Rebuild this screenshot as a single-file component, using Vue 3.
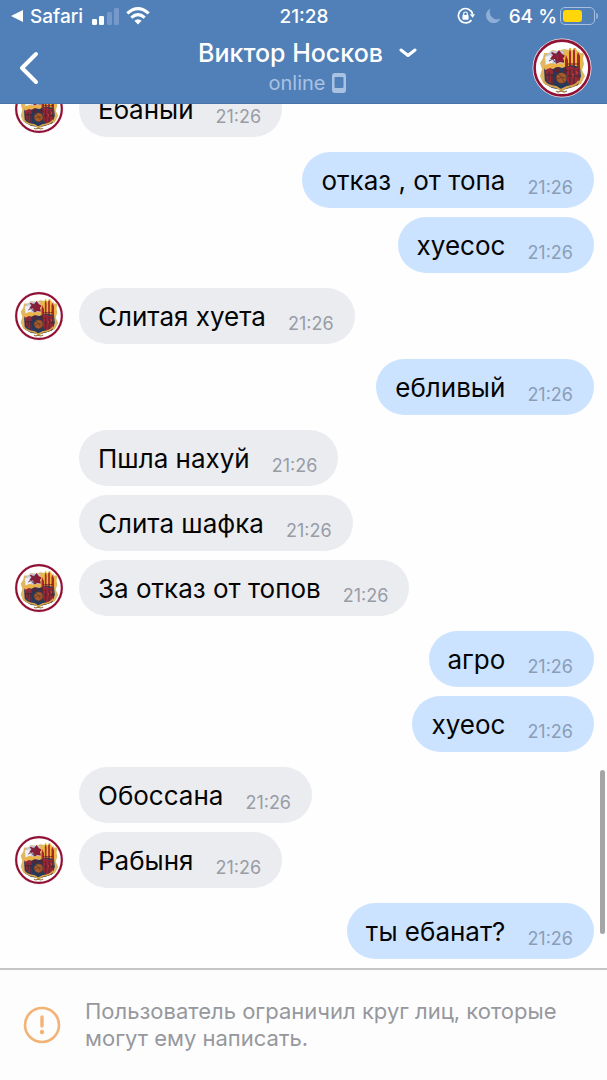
<script setup>
import { computed } from 'vue';

const contact = { name: 'Виктор Носков', status: 'online' };

// messages are grouped by sender, the avatar goes next to the last one
const groups = [
  { out: false, messages: ['Ебаный'] },
  { out: true, messages: ['отказ , от топа', 'хуесос'] },
  { out: false, messages: ['Слитая хуета'] },
  { out: true, messages: ['ебливый'] },
  { out: false, messages: ['Пшла нахуй', 'Слита шафка', 'За отказ от топов'] },
  { out: true, messages: ['агро', 'хуеос'] },
  { out: false, messages: ['Обоссана', 'Рабыня'] },
  { out: true, messages: ['ты ебанат?'] },
];

const time = '21:26';
const battery = 64;
const batteryWidth = computed(() => `${battery}%`);
</script>

<template>
  <div class="screen">
    <svg class="defs" aria-hidden="true">
      <symbol id="crest" viewBox="0 0 60 60">
        <circle cx="30" cy="30" r="29.5" fill="#f7e9ef" />
        <circle cx="30" cy="30" r="27.4" fill="#fff" stroke="#8f1235" stroke-width="2.6" />
        <!-- gold frame -->
        <path d="M12 15l5 0 3-3 6 1 6-2 5 1 8 0 2 3 5 0-1 6 1 5-2 6 3 6-4 8-8 3-6 1-4 3-5-3-9-2-6-3-3-7 2-7-2-6 3-5z" fill="#dfb865" />
        <!-- knight -->
        <path d="M14 17l6-4 11 0 1 13-10 2-9-1z" fill="#c3cbdb" />
        <path d="M13 19l5-2 3 4-1 5-6 1z" fill="#eef0f4" />
        <path d="M20 14l4 2 3-4 3 4 4 2-3 2 2 5-5-1-4 2-1-5-5 0 3-4-2-2z" fill="#8c1a36" />
        <path d="M17 23l4-2 2 3 4-1M24 15l2 6" stroke="#5a4259" stroke-width="1" fill="none" />
        <!-- towers -->
        <path d="M32 29V20l2-7 2 6 1-9 2 0 1 8 2-8 2 0 1 8 2-6 2 8v12l-8 4z" fill="#efb73a" />
        <path d="M33 32V22l1-5 2 5v10zM37 33V14l1-3 1 3v19zM41 33V13l1-3 1 3v20zM45 33V17l1-3 2 4v15z" fill="#a42b28" />
        <path d="M35 26h12M35 30h12" stroke="#76251f" stroke-width="1" />
        <!-- lower part -->
        <path d="M12 30l9-3 9 3 9-3 9 2 1 9-3 9-8 3-8 2-10-2-7-4z" fill="#26385b" />
        <path d="M13 31l5-2 3 4 0 14-6-4zM34 29l5-1 4 2 5-1 0 9-3 9-6 2-4-6z" fill="#972732" />
        <path d="M11 28l8-3 4 1 5-1 4 1-1 3-5 0-5 2-3-1-5 2z" fill="#edb34b" />
        <path d="M22 31l2-2 3 1 0 4-4 1zM31 31l3-1 2 3-3 2z" fill="#5f222f" />
        <path d="M17 34v9M20 36v10M38 31v15M42 31v15M46 31v9M13 37h9M36 38h12" stroke="#382a3c" stroke-width="1" fill="none" />
        <path d="M40 36l2 0-1 5zM44 33l2 1-1 4z" fill="#cc3b34" />
        <circle cx="29.500" cy="40" r="5.500" fill="#a65b2c" stroke="#50302a" stroke-width=".8" />
        <path d="M26 36q5 3 6 8M25 41q5-3 9-1" stroke="#63351f" stroke-width=".8" fill="none" />
        <path d="M12 43q3 5 12 6l5 3 6-3q9-1 12-6" stroke="#d7a54a" stroke-width="2" fill="none" />
        <path d="M24 53l2 1 3-1 3 1 3-1" stroke="#947442" stroke-width="1.300" fill="none" />
      </symbol>
    </svg>

    <header class="header">
      <div class="status-bar">
        <div class="status-side">
          <svg class="return" viewBox="0 0 14 14"><path d="M1 7L13 1V13Z" fill="#fff" /></svg>
          <span>Safari</span>
          <svg class="signal" viewBox="0 0 28 18">
            <rect x="0" y="12" width="5" height="6" rx="1.2" fill="#fff" />
            <rect x="7" y="9" width="5" height="9" rx="1.2" fill="#fff" />
            <rect x="15" y="5" width="5" height="13" rx="1.2" fill="#7499ca" />
            <rect x="22" y="1" width="5" height="17" rx="1.2" fill="#7499ca" />
          </svg>
          <svg class="wifi" viewBox="0 0 24 18" fill="none" stroke="#fff" stroke-width="3">
            <path d="M1.3 6.4Q12-3.2 22.7 6.4M5.3 10.6Q12 4.6 18.7 10.6" />
            <path d="M12 17.5L8.4 13.8Q12 10.8 15.6 13.8Z" fill="#fff" stroke="none" />
          </svg>
        </div>
        <span class="clock">21:28</span>
        <div class="status-side right">
          <svg class="lock" viewBox="0 0 18 18" fill="none" stroke="#fff">
            <path d="M15.6 7A7.2 7.2 0 1 0 14.4 13" stroke-width="1.7" />
            <path d="M12.8 7.2h5.2l-2.4 3.6z" fill="#fff" stroke="none" />
            <rect x="5.4" y="8" width="6.2" height="4.8" rx=".8" fill="#fff" stroke="none" />
            <path d="M6.7 8.3V6.8a1.8 1.8 0 0 1 3.6 0v1.5" stroke-width="1.2" />
          </svg>
          <svg class="moon" viewBox="0 0 16 16"><path d="M5.6.5A7.6 7.6 0 1 0 15.6 10.6 7.5 7.5 0 0 1 5.6.5Z" fill="#8fafd8" /></svg>
          <span>{{ battery }} %</span>
          <div class="battery">
            <div class="battery-case">
              <div class="battery-level" :style="{ width: batteryWidth }"></div>
            </div>
            <div class="battery-tip"></div>
          </div>
        </div>
      </div>

      <div class="nav">
        <button class="back" type="button" aria-label="Назад">
          <svg viewBox="0 0 20 34"><path d="M17 3L3 17L17 31" /></svg>
        </button>
        <div class="title">
          <button class="name" type="button">
            <span>{{ contact.name }}</span>
            <svg viewBox="0 0 18 10"><path d="M2 2L9 7.5L16 2" /></svg>
          </button>
          <div class="online">
            <span>{{ contact.status }}</span>
            <svg viewBox="0 0 14 20"><path fill-rule="evenodd" d="M3 0H11A3 3 0 0 1 14 3V17A3 3 0 0 1 11 20H3A3 3 0 0 1 0 17V3A3 3 0 0 1 3 0ZM3.500 4Q2.500 4 2.500 5V14Q2.500 15 3.500 15H10.500Q11.500 15 11.500 14V5Q11.500 4 10.500 4Z" /></svg>
          </div>
        </div>
        <button class="profile" type="button" aria-label="Профиль">
          <svg><use href="#crest" /></svg>
        </button>
      </div>
    </header>

    <main class="chat">
      <section v-for="(group, g) in groups" :key="g" class="group" :class="{ out: group.out }">
        <div v-for="(text, i) in group.messages" :key="i" class="row">
          <div v-if="!group.out" class="avatar">
            <svg v-if="i === group.messages.length - 1"><use href="#crest" /></svg>
          </div>
          <div class="bubble">
            <span class="text">{{ text }}</span>
            <time class="time">{{ time }}</time>
          </div>
        </div>
      </section>
      <div class="scrollbar"></div>
    </main>

    <footer class="notice">
      <svg viewBox="0 0 38 38">
        <circle cx="19" cy="19" r="17" fill="none" stroke="#f4b376" stroke-width="2.6" />
        <path d="M19 11V20" stroke="#f4b376" stroke-width="3.4" stroke-linecap="round" />
        <circle cx="19" cy="26" r="2.2" fill="#f4b376" />
      </svg>
      <p>Пользователь ограничил круг лиц, которые могут ему написать.</p>
    </footer>
  </div>
</template>

<style>
body {
  margin: 0;
}
</style>

<style scoped>
.screen {
  display: flex;
  flex-direction: column;
  height: 100vh;
  background: #fefefe;
  font-family: Inter, 'Liberation Sans', sans-serif;
  overflow: hidden;
}

.defs {
  position: absolute;
  width: 0;
  height: 0;
}

button {
  padding: 0;
  border: none;
  background: none;
  color: inherit;
  font: inherit;
  cursor: pointer;
}

svg {
  display: block;
  flex: none;
}

/* HEADER */
.header {
  flex: none;
  box-sizing: border-box;
  height: 104px;
  background: #5180b8;
  border-bottom: 1px solid #4a74a8;
  color: #fff;
}

.status-bar {
  display: grid;
  grid-template-columns: 1fr auto 1fr;
  align-items: center;
  height: 32px;
  padding: 0 9px 0 10px;
  font-size: 19px;
  font-weight: 500;
  white-space: nowrap;
}

.status-side {
  display: flex;
  align-items: center;
}

.status-side.right {
  justify-content: flex-end;
}

.return {
  width: 14px;
  height: 14px;
  margin-right: 6px;
}

.signal {
  width: 28px;
  height: 18px;
  margin: 0 6px 0 9px;
}

.wifi {
  width: 24px;
  height: 18px;
}

.lock {
  width: 18px;
  height: 18px;
  margin-right: 10px;
}

.moon {
  width: 16px;
  height: 16px;
  margin-right: 8px;
}

.battery {
  display: flex;
  align-items: center;
  gap: 1px;
  margin-left: 3px;
}

.battery-case {
  box-sizing: border-box;
  width: 35px;
  height: 18px;
  padding: 2px;
  border: 1px solid #a6bfdf;
  border-radius: 5px;
}

.battery-level {
  height: 100%;
  border-radius: 3px;
  background: #ffd60a;
}

.battery-tip {
  width: 2px;
  height: 6px;
  border-radius: 0 2px 2px 0;
  background: #8eafd7;
}

.nav {
  display: grid;
  grid-template-columns: 64px 1fr 60px;
  align-items: center;
  height: 71px;
  padding: 0 15px 0 19px;
}

.back svg {
  width: 20px;
  height: 34px;
}

.back path {
  fill: none;
  stroke: #fff;
  stroke-width: 4;
  stroke-linecap: round;
  stroke-linejoin: round;
}

.title {
  display: flex;
  flex-direction: column;
  align-items: center;
}

.name {
  display: flex;
  align-items: center;
  gap: 16px;
  font-size: 25px;
  line-height: 30px;
  font-weight: 500;
}

.name svg {
  width: 18px;
  height: 10px;
}

.name path {
  fill: none;
  stroke: #fff;
  stroke-width: 3;
  stroke-linecap: round;
  stroke-linejoin: round;
}

.online {
  display: flex;
  align-items: center;
  gap: 7px;
  font-size: 20px;
  line-height: 30px;
  color: #a9c2e2;
}

.online svg {
  width: 14px;
  height: 20px;
  fill: #a9c2e2;
}

.profile svg {
  width: 60px;
  height: 60px;
}

/* MESSAGES */
.chat {
  position: relative;
  display: flex;
  flex: 1;
  flex-direction: column;
  justify-content: flex-end;
  gap: 15px;
  min-height: 0;
  padding: 0 13px 9px 14px;
  overflow: hidden;
}

.group {
  display: flex;
  flex: none;
  flex-direction: column;
  gap: 9px;
}

.row {
  display: flex;
  align-items: center;
}

.out .row {
  justify-content: flex-end;
}

.avatar {
  width: 50px;
  margin-right: 15px;
}

.avatar svg {
  width: 50px;
  height: 50px;
}

.bubble {
  display: flex;
  gap: 22px;
  box-sizing: border-box;
  height: 56px;
  padding: 0 21px 0 19px;
  border-radius: 28px;
  background: #ebecf0;
  line-height: 58px;
  white-space: nowrap;
}

.out .bubble {
  background: #cce3ff;
}

.text {
  font-size: 26px;
  color: #050505;
}

.time {
  padding-top: 7px;
  font-size: 18px;
  color: #979ca6;
}

.out .time {
  color: #8a9eb8;
}

.scrollbar {
  position: absolute;
  right: 2px;
  bottom: 34px;
  width: 5px;
  height: 164px;
  border-radius: 3px;
  background: #a5a5a5;
}

/* FOOTER */
.notice {
  display: flex;
  flex: none;
  align-items: center;
  gap: 24px;
  box-sizing: border-box;
  height: 112px;
  padding: 0 23px;
  border-top: 2px solid #c6c4c6;
  background: #fdfdfd;
}

.notice svg {
  width: 38px;
  height: 38px;
}

.notice p {
  margin: 0;
  font-size: 22px;
  line-height: 27px;
  color: #96989d;
}
</style>
